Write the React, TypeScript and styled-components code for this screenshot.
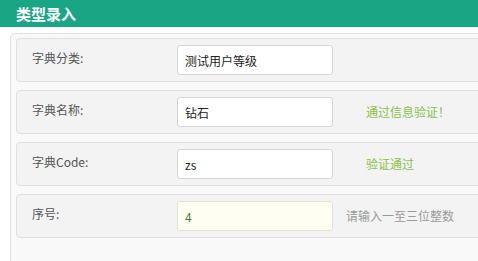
import styled, { createGlobalStyle } from 'styled-components';

const GlobalStyle = createGlobalStyle`
  html, body {
    margin: 0;
    padding: 0;
    background: #fff;
    overflow: hidden;
  }
  body {
    font-family: "Noto Sans CJK SC", "Open Sans", sans-serif;
  }
`;

const Header = styled.div`
  height: 27px;
  line-height: 27px;
  padding-left: 16px;
  background: #19a685;
  color: #fff;
  font-size: 15px;
  font-weight: bold;
`;

const Panel = styled.div`
  margin: 6px 0 0 10px;
  width: 640px;
  height: 260px;
  padding: 4px 0 0 5px;
  box-sizing: border-box;
  background: #f9f9f9;
  border: 1px solid #e2e2e2;
  border-radius: 5px;
`;

const Row = styled.div`
  display: flex;
  align-items: flex-start;
  height: 44px;
  box-sizing: border-box;
  margin-bottom: 8px;
  padding-left: 15px;
  background: #f3f3f3;
  border: 1px solid #e0e0e0;
  border-radius: 4px;
`;

const Label = styled.div`
  width: 145px;
  padding-top: 10px;
  font-size: 12px;
  line-height: 18px;
  color: #555;
`;

const Input = styled.input<{ $warn?: boolean }>`
  margin-top: 6px;
  width: 156px;
  height: 30px;
  box-sizing: border-box;
  padding: 0 7px;
  font-family: inherit;
  font-size: 12px;
  color: ${(p) => (p.$warn ? '#3d7d3d' : '#222')};
  background: ${(p) => (p.$warn ? '#fefff2' : '#fff')};
  border: 1px solid ${(p) => (p.$warn ? '#e3e6cf' : '#d6d6d6')};
  border-radius: 3px;
  outline: none;
`;

const Message = styled.div<{ $ok?: boolean }>`
  margin-left: ${(p) => (p.$ok ? '33px' : '13px')};
  line-height: 42px;
  font-size: 12px;
  color: ${(p) => (p.$ok ? '#88c14a' : '#9a9a9a')};
  white-space: nowrap;
`;

const rows = [
  { label: '字典分类:', value: '测试用户等级' },
  { label: '字典名称:', value: '钻石', msg: '通过信息验证！', ok: true },
  { label: '字典Code:', value: 'zs', msg: '验证通过', ok: true },
  { label: '序号:', value: '4', msg: '请输入一至三位整数', ok: false, warn: true },
];

export default function App() {
  return (
    <>
      <GlobalStyle />
      <Header>类型录入</Header>
      <Panel>
        {rows.map((r) => (
          <Row key={r.label}>
            <Label>{r.label}</Label>
            <Input defaultValue={r.value} $warn={r.warn} />
            {r.msg && <Message $ok={r.ok}>{r.msg}</Message>}
          </Row>
        ))}
      </Panel>
    </>
  );
}
